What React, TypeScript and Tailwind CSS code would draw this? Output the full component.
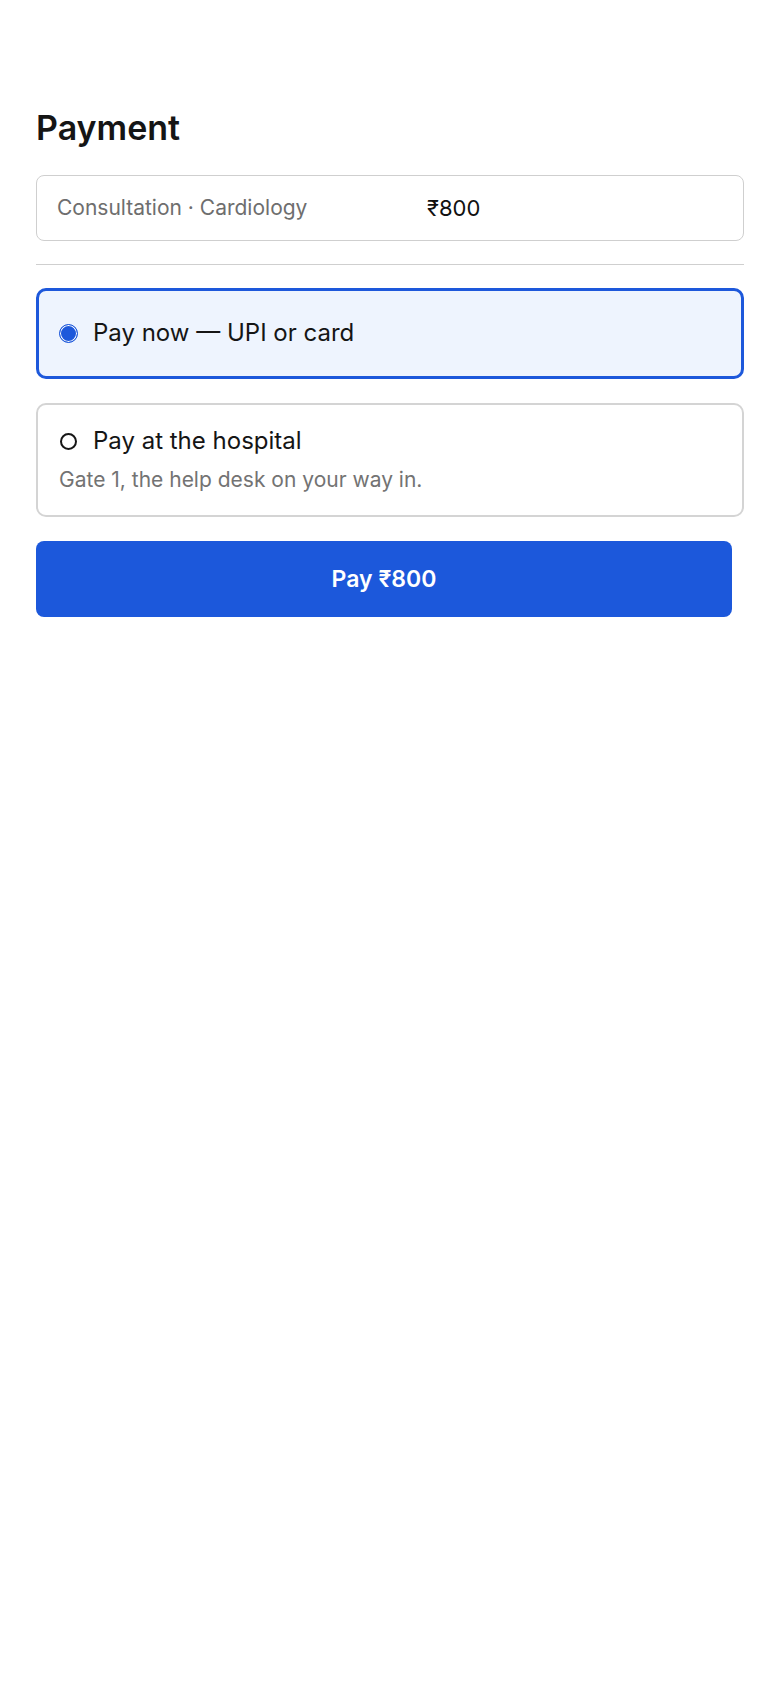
import { useState } from 'react'

type Method = 'now' | 'hospital'

function Radio({ checked }: { checked: boolean }) {
  if (checked) {
    return (
      <span className="flex h-[19px] w-[19px] shrink-0 rounded-full border-[1.5px] border-[#1d58db] bg-[#1d58db] shadow-[inset_0_0_0_1px_#ffffff]" />
    )
  }
  return (
    <span className="flex h-[19px] w-[19px] shrink-0 items-center justify-center">
      <span className="h-[17px] w-[17px] rounded-full border-2 border-[#161616]" />
    </span>
  )
}

export default function App() {
  const [method, setMethod] = useState<Method>('now')
  const amount = '₹800'

  return (
    <div className="min-h-screen bg-white px-9 pt-[108px] font-['Inter','Noto_Sans',sans-serif] text-[#151515]">
      <h1 className="text-[34px] font-semibold leading-10">Payment</h1>

      {/* Summary */}
      <div className="mt-[27px] flex items-center rounded-lg border border-[#cfcfcf] px-5 py-[18px] leading-7">
        <span className="w-[370px] text-[21px] text-[#6e6e6e]">Consultation · Cardiology</span>
        <span className="text-[22px] text-[#111111]">{amount}</span>
      </div>

      <hr className="my-[23px] border-[#cfcfcf]" />

      {/* Options */}
      <div className="flex flex-col gap-6">
        <button
          onClick={() => setMethod('now')}
          className={
            method === 'now'
              ? 'flex items-center gap-[15px] rounded-[10px] border-[3px] border-[#1d58db] bg-[#eef4fe] px-5 pt-[27px] pb-[28px] text-left'
              : 'flex items-center gap-[15px] rounded-[10px] border-2 border-[#d4d4d4] bg-white px-[21px] pt-[28px] pb-[29px] text-left'
          }
        >
          <Radio checked={method === 'now'} />
          <span className="text-[24px] leading-[30px]">Pay now — UPI or card</span>
        </button>

        <button
          onClick={() => setMethod('hospital')}
          className={
            method === 'hospital'
              ? 'flex flex-col rounded-[10px] border-[3px] border-[#1d58db] bg-[#eef4fe] px-5 pt-5 pb-5 text-left'
              : 'flex flex-col rounded-[10px] border-2 border-[#d4d4d4] bg-white px-[21px] pt-[21px] pb-[21px] text-left'
          }
        >
          <div className="flex items-center gap-[15px]">
            <Radio checked={method === 'hospital'} />
            <span className="text-[24px] leading-[30px]">Pay at the hospital</span>
          </div>
          <p className="mt-[10px] text-[21px] leading-7 text-[#737373]">
            Gate 1, the help desk on your way in.
          </p>
        </button>

        <button className="mr-3 h-[76px] rounded-lg bg-[#1c58db] text-[23px] font-semibold text-white">
          Pay {amount}
        </button>
      </div>
    </div>
  )
}
